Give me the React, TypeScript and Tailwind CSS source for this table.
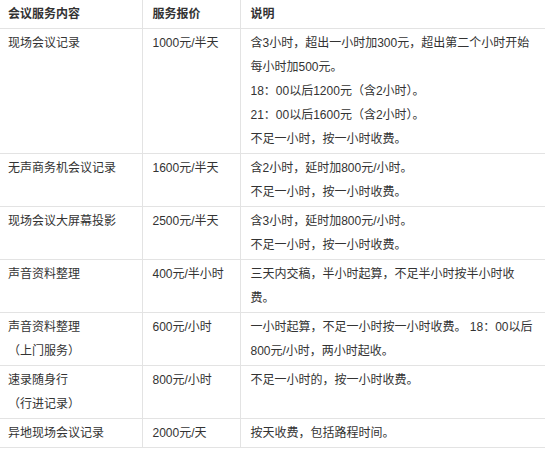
const rows: { name: string[]; price: string; desc: string[] }[] = [
  {
    name: ["现场会议记录"],
    price: "1000元/半天",
    desc: [
      "含3小时，超出一小时加300元，超出第二个小时开始",
      "每小时加500元。",
      "18：00以后1200元（含2小时）。",
      "21：00以后1600元（含2小时）。",
      "不足一小时，按一小时收费。",
    ],
  },
  {
    name: ["无声商务机会议记录"],
    price: "1600元/半天",
    desc: ["含2小时，延时加800元/小时。", "不足一小时，按一小时收费。"],
  },
  {
    name: ["现场会议大屏幕投影"],
    price: "2500元/半天",
    desc: ["含3小时，延时加800元/小时。", "不足一小时，按一小时收费。"],
  },
  {
    name: ["声音资料整理"],
    price: "400元/半小时",
    desc: ["三天内交稿，半小时起算，不足半小时按半小时收", "费。"],
  },
  {
    name: ["声音资料整理", "（上门服务）"],
    price: "600元/小时",
    desc: ["一小时起算，不足一小时按一小时收费。 18：00以后", "800元/小时，两小时起收。"],
  },
  {
    name: ["速录随身行", "（行进记录）"],
    price: "800元/小时",
    desc: ["不足一小时的，按一小时收费。"],
  },
  {
    name: ["异地现场会议记录"],
    price: "2000元/天",
    desc: ["按天收费，包括路程时间。"],
  },
];

export default function App() {
  return (
    <div className="w-[545px] h-[449px] bg-white overflow-hidden font-['Liberation_Sans','Noto_Sans_CJK_SC',sans-serif] text-[12px] leading-[24px] text-[#333]">
      <table className="w-full border-collapse table-fixed">
        <colgroup>
          <col className="w-[142px]" />
          <col className="w-[98px]" />
          <col />
        </colgroup>
        <thead>
          <tr className="text-[#333]">
            <th className="text-left font-bold pl-[8px] py-[2px] border-b border-r border-[#e3e3e3]">会议服务内容</th>
            <th className="text-left font-bold pl-[10px] py-[2px] border-b border-r border-[#e3e3e3]">服务报价</th>
            <th className="text-left font-bold pl-[10px] py-[2px] border-b border-[#e3e3e3]">说明</th>
          </tr>
        </thead>
        <tbody>
          {rows.map((r, i) => (
            <tr key={i} className="align-top">
              <td className="pl-[8px] py-[2px] border-b border-r border-[#e3e3e3]">
                {r.name.map((n, j) => (
                  <div key={j} className="whitespace-nowrap">{n}</div>
                ))}
              </td>
              <td className="pl-[10px] py-[2px] border-b border-r border-[#e3e3e3] whitespace-nowrap">{r.price}</td>
              <td className="pl-[10px] py-[2px] border-b border-[#e3e3e3]">
                {r.desc.map((d, j) => (
                  <div key={j} className="whitespace-nowrap">{d}</div>
                ))}
              </td>
            </tr>
          ))}
        </tbody>
      </table>
    </div>
  );
}
